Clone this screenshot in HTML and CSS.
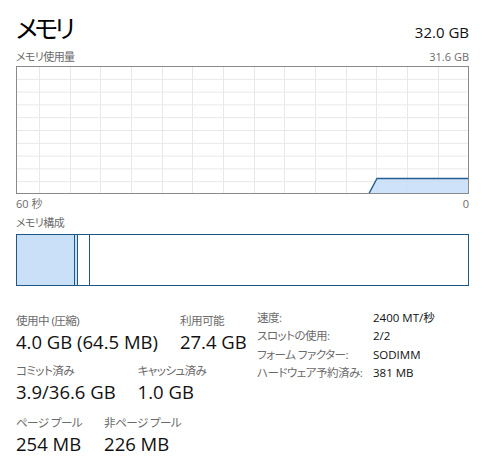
FILE: index.html
```html
<!DOCTYPE html>
<html lang="ja">
<head>
<meta charset="utf-8">
<title>メモリ</title>
<link rel="stylesheet" href="styles.css">
</head>
<body>
<div class="page">
  <div class="header">
    <div class="title">メモリ</div>
    <div class="total">32.0 GB</div>
  </div>
  <div class="caption-row">
    <span class="jp">メモリ使用量</span>
    <span class="num">31.6 GB</span>
  </div>
  <div class="chart">
    <svg width="451" height="126" viewBox="0 0 451 126" xmlns="http://www.w3.org/2000/svg">
      <g stroke="#e8e8e8" stroke-width="1">
        <line x1="0" y1="12.3" x2="451" y2="12.3"/>
        <line x1="0" y1="25.1" x2="451" y2="25.1"/>
        <line x1="0" y1="37.9" x2="451" y2="37.9"/>
        <line x1="0" y1="50.7" x2="451" y2="50.7"/>
        <line x1="0" y1="63.5" x2="451" y2="63.5"/>
        <line x1="0" y1="76.3" x2="451" y2="76.3"/>
        <line x1="0" y1="89.1" x2="451" y2="89.1"/>
        <line x1="0" y1="101.9" x2="451" y2="101.9"/>
        <line x1="0" y1="114.7" x2="451" y2="114.7"/>
        <line x1="22.5" y1="0" x2="22.5" y2="126"/>
        <line x1="53.5" y1="0" x2="53.5" y2="126"/>
        <line x1="83.5" y1="0" x2="83.5" y2="126"/>
        <line x1="114.5" y1="0" x2="114.5" y2="126"/>
        <line x1="145.5" y1="0" x2="145.5" y2="126"/>
        <line x1="175.5" y1="0" x2="175.5" y2="126"/>
        <line x1="206.5" y1="0" x2="206.5" y2="126"/>
        <line x1="237.5" y1="0" x2="237.5" y2="126"/>
        <line x1="267.5" y1="0" x2="267.5" y2="126"/>
        <line x1="298.5" y1="0" x2="298.5" y2="126"/>
        <line x1="329.5" y1="0" x2="329.5" y2="126"/>
        <line x1="359.5" y1="0" x2="359.5" y2="126"/>
        <line x1="390.5" y1="0" x2="390.5" y2="126"/>
        <line x1="421.5" y1="0" x2="421.5" y2="126"/>
      </g>
      <polygon points="352,126 360,111.5 451,111.5 451,126" fill="#c9e0f8" fill-opacity="0.9"/>
      <polyline points="352,126.5 360,111.5 451,111.5" fill="none" stroke="#245f93" stroke-width="1.4"/>
    </svg>
  </div>
  <div class="axis-row">
    <span>60 秒</span>
    <span>0</span>
  </div>
  <div class="caption-row comp-caption">
    <span class="jp">メモリ構成</span>
  </div>
  <div class="comp">
    <div class="seg seg-inuse"></div>
    <div class="seg seg-modified"></div>
    <div class="seg seg-standby"></div>
    <div class="seg seg-free"></div>
  </div>
  <div class="stats">
    <div class="stats-left">
      <div class="stat-row">
        <div class="stat">
          <div class="stat-label">使用中 (圧縮)</div>
          <div class="stat-value">4.0 GB (64.5 MB)</div>
        </div>
        <div class="stat">
          <div class="stat-label">利用可能</div>
          <div class="stat-value">27.4 GB</div>
        </div>
      </div>
      <div class="stat-row">
        <div class="stat">
          <div class="stat-label">コミット済み</div>
          <div class="stat-value">3.9/36.6 GB</div>
        </div>
        <div class="stat">
          <div class="stat-label">キャッシュ済み</div>
          <div class="stat-value">1.0 GB</div>
        </div>
      </div>
      <div class="stat-row stat-row-last">
        <div class="stat">
          <div class="stat-label">ページ プール</div>
          <div class="stat-value">254 MB</div>
        </div>
        <div class="stat">
          <div class="stat-label">非ページ プール</div>
          <div class="stat-value">226 MB</div>
        </div>
      </div>
    </div>
    <div class="info">
      <div class="info-label">速度:</div>
      <div class="info-value">2400 MT/秒</div>
      <div class="info-label">スロットの使用:</div>
      <div class="info-value">2/2</div>
      <div class="info-label">フォーム ファクター:</div>
      <div class="info-value">SODIMM</div>
      <div class="info-label">ハードウェア予約済み:</div>
      <div class="info-value">381 MB</div>
    </div>
  </div>
</div>
</body>
</html>
```

FILE: styles.css
```css
html, body {
  margin: 0;
  padding: 0;
  background: #ffffff;
}

body {
  font-family: "Open Sans", "Noto Sans CJK JP", sans-serif;
  color: #111111;
  font-feature-settings: "palt" 1;
}

.page {
  width: 453px;
  padding: 11px 20px 0 16px;
}

.header {
  display: flex;
  justify-content: space-between;
  align-items: baseline;
  height: 32px;
}

.title {
  font-family: "Noto Sans CJK JP", sans-serif;
  font-size: 25px;
  line-height: 32px;
  letter-spacing: -3.5px;
  color: #000000;
}

.total {
  font-size: 15px;
  line-height: 20px;
  color: #111111;
}

.caption-row {
  display: flex;
  justify-content: space-between;
  margin-top: 7px;
  font-size: 11px;
  line-height: 14px;
  height: 14px;
  color: #6b6b6b;
}

.jp {
  letter-spacing: -0.6px;
}

.chart {
  margin-top: 2px;
  border: 1px solid #8a8a8a;
  height: 126px;
  overflow: hidden;
}

.chart svg {
  display: block;
}

.axis-row {
  display: flex;
  justify-content: space-between;
  margin-top: 3px;
  font-size: 11px;
  line-height: 14px;
  height: 14px;
  color: #6b6b6b;
}

.comp-caption {
  margin-top: 5px;
}

.comp {
  margin-top: 4px;
  display: flex;
  height: 50px;
  border: 1px solid #1f5784;
}

.seg {
  height: 100%;
}

.seg-inuse {
  width: 57px;
  background: #c9e0f8;
  border-right: 1px solid #1f5784;
}

.seg-modified {
  width: 2px;
  background: #c9e0f8;
  border-right: 1px solid #1f5784;
}

.seg-standby {
  width: 11px;
  background: #ffffff;
  border-right: 1px solid #1f5784;
}

.seg-free {
  flex: 1;
  background: #ffffff;
}

.stats {
  margin-top: 23px;
  display: grid;
  grid-template-columns: 241px 1fr;
}

.stats-left {
  padding-top: 3px;
}

.stat-row {
  display: flex;
  gap: 22px;
  margin-bottom: 8px;
}

.stat-row-last {
  padding-top: 2px;
}

.stat-label {
  font-size: 11.6px;
  line-height: 17px;
  letter-spacing: -0.6px;
  white-space: nowrap;
  color: #6b6b6b;
}

.stat-value {
  font-size: 18.5px;
  line-height: 25px;
  white-space: nowrap;
  color: #111111;
}

.info {
  display: grid;
  grid-template-columns: 116px auto;
  font-size: 11.5px;
  line-height: 18.4px;
  align-content: start;
}

.info-label {
  color: #6b6b6b;
  letter-spacing: -0.5px;
  white-space: nowrap;
}

.info-value {
  color: #111111;
  white-space: nowrap;
}
```
